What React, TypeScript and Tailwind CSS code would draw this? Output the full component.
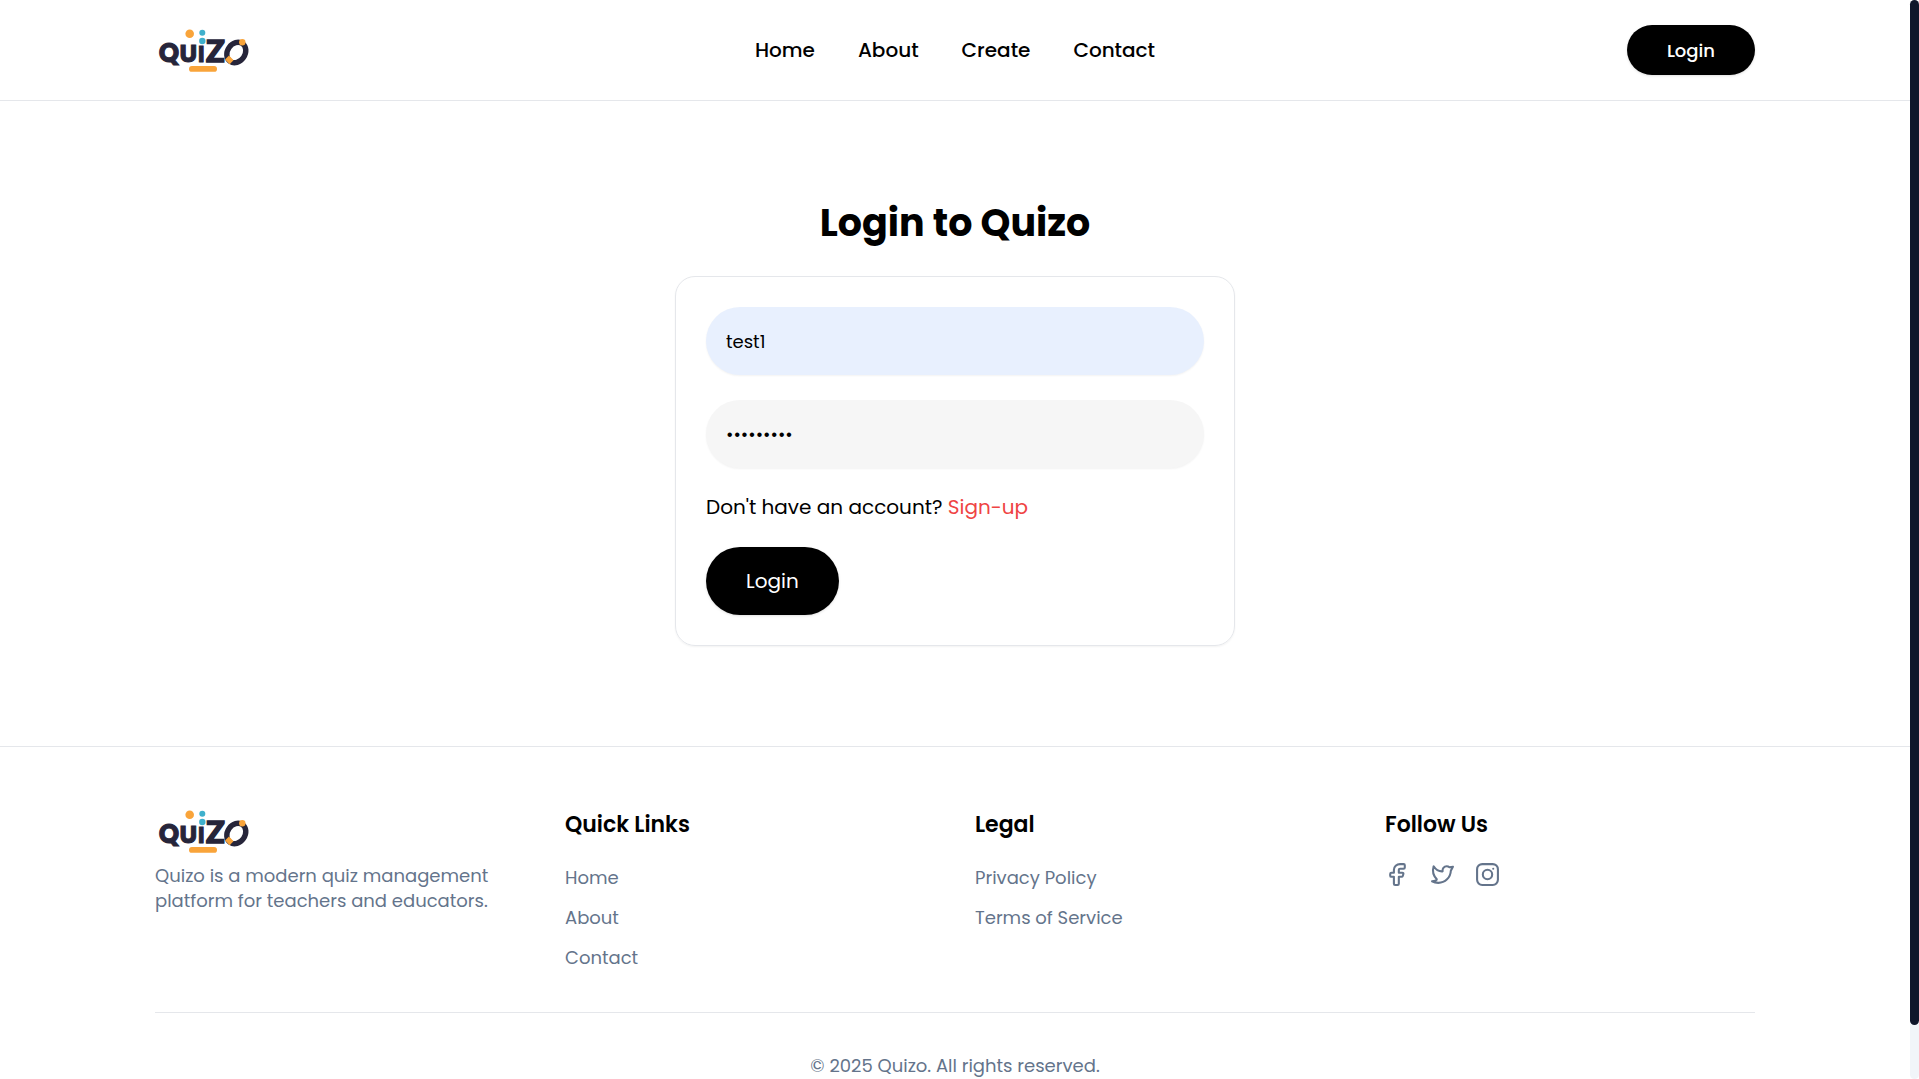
import React from "react";

function Logo() {
  return (
    <svg viewBox="0 0 100 50" className="h-[50px] w-[100px]" role="img" aria-label="Quizo">
      <g fill="#26253a" fontFamily="Poppins, sans-serif" fontWeight="700" stroke="#26253a" strokeWidth="1">
        <text x="3.8" y="37" fontSize="26">Q</text>
        <text x="24.5" y="37" fontSize="25">U</text>
        <text x="43" y="37" fontSize="22">I</text>
        <text x="51" y="36.5" fontSize="31" fontFamily="Lato, sans-serif" fontWeight="900" strokeWidth="1.4">Z</text>
      </g>
      <ellipse cx="81.3" cy="27.5" rx="8.8" ry="10.8" transform="rotate(35 81.3 27.5)" fill="none" stroke="#26253a" strokeWidth="5.4" />
      <path d="M72 32.6 L76.6 37.2" stroke="#f9a43a" strokeWidth="5.6" />
      <circle cx="87.3" cy="17.3" r="3.2" fill="#f9a43a" />
      <circle cx="34.7" cy="8.8" r="4.3" fill="#f9a43a" />
      <circle cx="47.3" cy="7.8" r="3" fill="#3fb0cc" />
      <circle cx="47.3" cy="16" r="3.2" fill="#3fb0cc" />
      <rect x="34" y="41" width="28" height="5.8" rx="2.9" fill="#f9a43a" />
    </svg>
  );
}

function Icon({ children }: { children: React.ReactNode }) {
  return (
    <svg viewBox="0 0 24 24" className="size-[25px]" fill="none" stroke="currentColor" strokeWidth="2" strokeLinejoin="round" strokeLinecap="round" aria-hidden="true">
      {children}
    </svg>
  );
}

const navLinks = ["Home", "About", "Create", "Contact"];

function FooterHeading({ children }: { children: React.ReactNode }) {
  return <h3 className="text-[22px] leading-[38px] font-semibold text-black">{children}</h3>;
}

function FooterLinks({ title, links }: { title: string; links: string[] }) {
  return (
    <div>
      <FooterHeading>{title}</FooterHeading>
      <ul className="mt-[21px] flex flex-col gap-[15px]">
        {links.map((l) => (
          <li key={l} className="leading-[25px]">
            <a href="#">{l}</a>
          </li>
        ))}
      </ul>
    </div>
  );
}

export default function App() {
  return (
    <div className="flex h-screen bg-white font-['Poppins','Inter',sans-serif] text-black">
      <div className="min-w-0 flex-1 overflow-y-auto [scrollbar-width:none]">
        <header className="border-b border-[#e5e7eb] py-[25px]">
          <div className="mx-auto grid max-w-[1600px] grid-cols-[1fr_auto_1fr] items-center">
            <a href="#" className="justify-self-start"><Logo /></a>
            <nav className="flex gap-[43px] text-[20px] font-medium">
              {navLinks.map((l) => (
                <a key={l} href="#">{l}</a>
              ))}
            </nav>
            <button className="h-[50px] justify-self-end rounded-full bg-black px-10 text-[18px] leading-[25px] font-medium text-white shadow-sm">Login</button>
          </div>
        </header>

        <main className="flex flex-col items-center py-[100px]">
          <h1 className="text-[38px] leading-[43px] font-bold">Login to Quizo</h1>
          <form className="mt-8 flex w-full max-w-[560px] flex-col gap-[25px] rounded-[20px] border border-[#e5e7eb] p-[30px] shadow-xs" onSubmit={(e) => e.preventDefault()}>
            <input aria-label="Username" defaultValue="test1" className="h-[68px] w-full rounded-full bg-[#e8f0fe] px-5 text-[18px] shadow-xs outline-none" />
            <input aria-label="Password" type="password" defaultValue="password1" className="h-[68px] w-full rounded-full bg-[#f6f6f6] px-5 text-[18px] shadow-xs outline-none" />
            <p className="text-[20px] leading-[29px]">
              Don't have an account? <a href="#" className="text-[#ef4444]">Sign-up</a>
            </p>
            <button type="submit" className="h-[68px] self-start rounded-full bg-black px-10 text-[20px] text-white shadow-sm">Login</button>
          </form>
        </main>

        <footer className="border-t border-[#e5e7eb] pt-[59px] pb-[60px] text-[18px] text-[#64748b]">
          <div className="mx-auto max-w-[1600px]">
            <div className="grid grid-cols-4 gap-10 pb-[42px]">
              <div>
                <Logo />
                <p className="mt-[7px] leading-[25px]">Quizo is a modern quiz management<br />platform for teachers and educators.</p>
              </div>
              <FooterLinks title="Quick Links" links={["Home", "About", "Contact"]} />
              <FooterLinks title="Legal" links={["Privacy Policy", "Terms of Service"]} />
              <div>
                <FooterHeading>Follow Us</FooterHeading>
                <div className="mt-[18px] flex gap-5">
                  <a href="#" aria-label="Facebook">
                    <Icon><path d="M6.182 10.333C5.204 10.333 5 10.525 5 11.444V13.111C5 14.03 5.204 14.222 6.182 14.222H8.545V20.889C8.545 21.808 8.75 22 9.727 22H12.091C13.069 22 13.273 21.808 13.273 20.889V14.222H15.927C16.668 14.222 16.859 14.087 17.063 13.416L17.57 11.75C17.919 10.601 17.704 10.333 16.433 10.333H13.273V7.556C13.273 6.942 13.802 6.444 14.455 6.444H17.818C18.796 6.444 19 6.253 19 5.333V3.111C19 2.192 18.796 2 17.818 2H14.455C11.191 2 8.545 4.487 8.545 7.556V10.333H6.182Z" /></Icon>
                  </a>
                  <a href="#" aria-label="Twitter">
                    <Icon><path d="M2 18.5C3.765 19.521 5.814 20 8 20C14.481 20 19.762 14.863 19.992 8.438L22 4.5L18.646 5C17.941 4.378 17.014 4 16 4C13.428 4 11.501 6.517 12.121 8.98C8.568 9.209 5.349 7.021 3.487 4.105C2.251 8.302 3.396 13.356 6.5 16.471C6.5 17.647 3.5 18.349 2 18.5Z" /></Icon>
                  </a>
                  <a href="#" aria-label="Instagram">
                    <Icon>
                      <rect x="2" y="2" width="20" height="20" rx="5" />
                      <circle cx="12" cy="12" r="4.5" />
                      <path d="M17.508 6.5H17.499" />
                    </Icon>
                  </a>
                </div>
              </div>
            </div>
            <p className="border-t border-[#e5e7eb] pt-10 text-center leading-[25px]">© 2025 Quizo. All rights reserved.</p>
          </div>
        </footer>
      </div>
      <div className="w-[9px] rounded-full bg-slate-100" aria-hidden="true">
        <div className="h-[95%] rounded-full bg-slate-900" />
      </div>
    </div>
  );
}
